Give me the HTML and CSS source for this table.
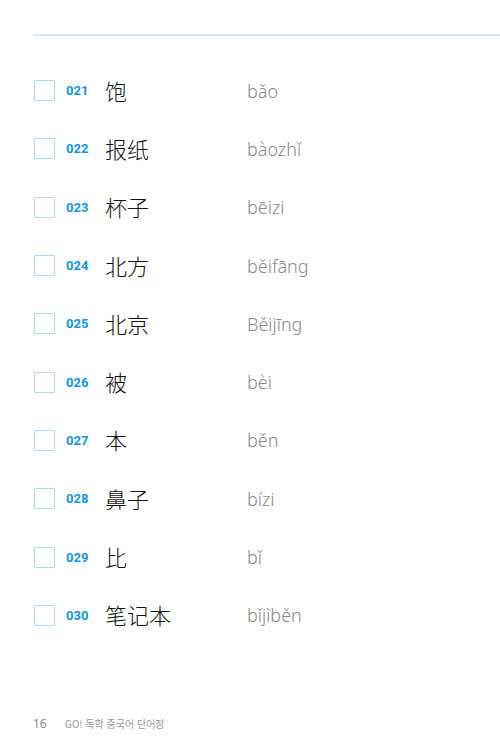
FILE: index.html
```html
<!DOCTYPE html>
<html lang="ko">
<head>
  <meta charset="UTF-8">
  <title>GO! 독학 중국어 단어장</title>
  <link rel="stylesheet" href="styles.css">
</head>
<body>
  <div class="page">
    <div class="top-rule"></div>

    <ul class="word-list">
      <li class="word"><span class="check"></span><span class="num">021</span><span class="hanzi">饱</span><span class="pinyin">bǎo</span></li>
      <li class="word"><span class="check"></span><span class="num">022</span><span class="hanzi">报纸</span><span class="pinyin">bàozhǐ</span></li>
      <li class="word"><span class="check"></span><span class="num">023</span><span class="hanzi">杯子</span><span class="pinyin">bēizi</span></li>
      <li class="word"><span class="check"></span><span class="num">024</span><span class="hanzi">北方</span><span class="pinyin">běifāng</span></li>
      <li class="word"><span class="check"></span><span class="num">025</span><span class="hanzi">北京</span><span class="pinyin">Běijīng</span></li>
      <li class="word"><span class="check"></span><span class="num">026</span><span class="hanzi">被</span><span class="pinyin">bèi</span></li>
      <li class="word"><span class="check"></span><span class="num">027</span><span class="hanzi">本</span><span class="pinyin">běn</span></li>
      <li class="word"><span class="check"></span><span class="num">028</span><span class="hanzi">鼻子</span><span class="pinyin">bízi</span></li>
      <li class="word"><span class="check"></span><span class="num">029</span><span class="hanzi">比</span><span class="pinyin">bǐ</span></li>
      <li class="word"><span class="check"></span><span class="num">030</span><span class="hanzi">笔记本</span><span class="pinyin">bǐjìběn</span></li>
    </ul>

    <div class="footer">
      <span class="page-no">16</span>
      <span class="book">GO! 독학 중국어 단어장</span>
    </div>
  </div>
</body>
</html>
```

FILE: styles.css
```css
/* page */
html, body {
  margin: 0;
  padding: 0;
  background: #fff;
}
.page {
  width: 500px;
  height: 750px;
  padding-top: 34px;
  box-sizing: border-box;
  position: relative;
  font-family: "Noto Sans", "Noto Sans CJK KR", sans-serif;
}
.top-rule {
  margin-left: 33px;
  height: 1.5px;
  background: #d3eaf7;
}

/* word rows */
.word-list {
  list-style: none;
  margin: 26px 0 0;
  padding: 0 0 0 34px;
}
.word {
  display: flex;
  align-items: center;
  height: 58.3px;
}
.check {
  width: 19px;
  height: 19px;
  border: 1.5px solid #a9dbf7;
  border-radius: 1px;
  flex: none;
}
.num {
  width: 39px;
  margin-left: 11px;
  font-family: "Roboto", "Liberation Sans", sans-serif;
  font-weight: 700;
  font-size: 13px;
  color: #1195e3;
}
.hanzi {
  width: 142px;
  font-family: "Noto Sans CJK SC", serif;
  font-weight: 300;
  font-size: 22px;
  color: #111;
  line-height: 1;
  padding-bottom: 2px;
}
.pinyin {
  font-family: "Noto Sans", sans-serif;
  font-weight: 300;
  font-size: 18px;
  color: #8a8a8a;
}

/* footer */
.footer {
  position: absolute;
  left: 33px;
  top: 715px;
  display: flex;
  align-items: baseline;
  color: #888;
}
.page-no {
  width: 32px;
  font-size: 12px;
}
.book {
  font-family: "Noto Sans CJK KR", sans-serif;
  font-size: 10px;
  color: #999;
}
```
